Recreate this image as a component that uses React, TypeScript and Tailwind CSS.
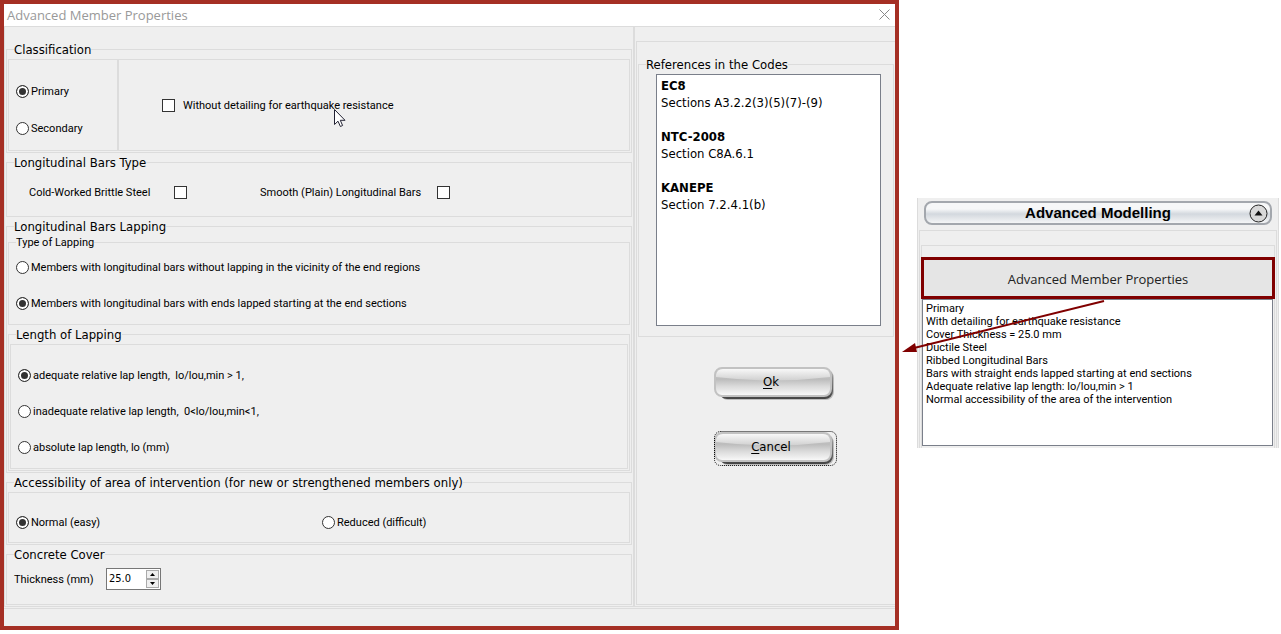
import { useState } from 'react';
import type { ReactNode } from 'react';
import { clsx } from 'clsx';

const dotClass =
  'size-[13px] shrink-0 appearance-none rounded-full border border-[#333] bg-white checked:bg-[#333] checked:shadow-[inset_0_0_0_2px_white]';
const boxClass =
  'size-[13px] shrink-0 appearance-none border border-[#333] bg-white checked:bg-[#333] checked:shadow-[inset_0_0_0_2px_white]';

interface RadioProps {
  name: string;
  label: string;
  value: string;
  current: string;
  onPick: (value: string) => void;
}

const Radio = ({ name, label, value, current, onPick }: RadioProps) => (
  <label className="flex items-center gap-0.5 whitespace-pre leading-[13px]">
    <input
      type="radio"
      name={name}
      value={value}
      checked={current === value}
      onChange={() => onPick(value)}
      className={dotClass}
    />
    {label}
  </label>
);

interface GroupProps {
  title: string;
  small?: boolean;
  children: ReactNode;
  className?: string;
}

const Group = ({ title, small = false, children, className }: GroupProps) => (
  <fieldset className={clsx('min-w-0 border border-[#dcdcdc] px-px', className)}>
    <legend
      className={clsx(
        'ml-1.5',
        small
          ? 'text-[11px] leading-[13px]'
          : "font-['DejaVu_Sans_Condensed','DejaVu_Sans',sans-serif] text-[13px] leading-[17px]"
      )}
    >
      {title}
    </legend>
    {children}
  </fieldset>
);

interface GlossyButtonProps {
  hotkey: string;
  rest: string;
  focused?: boolean;
}

const GlossyButton = ({ hotkey, rest, focused = false }: GlossyButtonProps) => (
  <button
    type="button"
    className="relative h-[35px] w-[123px] pb-1 pr-2 text-center font-['DejaVu_Sans_Condensed','DejaVu_Sans',sans-serif] text-[13px] leading-[17px] outline-none"
  >
    <svg className="absolute inset-0" width="123" height="35" viewBox="0 0 123 35" aria-hidden="true">
      <defs>
        <linearGradient id={`body-${hotkey}`} x1="0" y1="0" x2="0" y2="1">
          <stop offset="0" stopColor="#d2d2d2" />
          <stop offset="0.4" stopColor="#bcbcbc" />
          <stop offset="0.65" stopColor="#dadada" />
          <stop offset="1" stopColor="#fbfbfb" />
        </linearGradient>
        <linearGradient id={`gloss-${hotkey}`} x1="0" y1="0" x2="0" y2="1">
          <stop offset="0" stopColor="#f8f8f8" />
          <stop offset="1" stopColor="#d0d0d0" />
        </linearGradient>
        <linearGradient id={`shade-${hotkey}`} x1="0" y1="0" x2="0" y2="1">
          <stop offset="0" stopColor="#a8a8a8" />
          <stop offset="1" stopColor="#444444" />
        </linearGradient>
      </defs>
      <rect x="6" y="4" width="114" height="30" rx="8" fill="#bdbdbd" />
      <rect x="5" y="3" width="114" height="30" rx="8" fill={`url(#shade-${hotkey})`} />
      <rect x="1" y="2" width="116" height="28" rx="7" fill={`url(#body-${hotkey})`} stroke="#c2c2c2" strokeWidth="2" />
      <path d="M2 11 V9 Q3 3 9 3 H109 Q115 3 116 9 V11 Q59 18 2 11 Z" fill={`url(#gloss-${hotkey})`} />
      {focused && (
        <rect x="0.5" y="0.5" width="122" height="34" rx="6" fill="none" stroke="#000" strokeDasharray="1 1" />
      )}
    </svg>
    <span className="relative">
      <span className="underline underline-offset-2">{hotkey}</span>
      {rest}
    </span>
  </button>
);

const references = [
  { code: 'EC8', sections: 'Sections A3.2.2(3)(5)(7)-(9)' },
  { code: 'NTC-2008', sections: 'Section C8A.6.1' },
  { code: 'KANEPE', sections: 'Section 7.2.4.1(b)' },
];

const summary = [
  'Primary',
  'With detailing for earthquake resistance',
  'Cover Thickness = 25.0 mm',
  'Ductile Steel',
  'Ribbed Longitudinal Bars',
  'Bars with straight ends lapped starting at end sections',
  'Adequate relative lap length: lo/lou,min > 1',
  'Normal accessibility of the area of the intervention',
];

const MemberDialog = () => {
  const [role, setRole] = useState('primary');
  const [lapping, setLapping] = useState('lapped');
  const [length, setLength] = useState('adequate');
  const [access, setAccess] = useState('normal');
  const [thickness, setThickness] = useState(25);

  return (
    <section className="min-w-0 flex-1 border-4 border-[#a52f24] bg-[#efefef]">
      <header className="flex h-[22px] items-center justify-between bg-white pl-[3px] pr-[5px]">
        <h1 className="font-['Open_Sans','Noto_Sans',sans-serif] text-[13px] leading-[18px] text-[#999]">
          Advanced Member Properties
        </h1>
        <button type="button" aria-label="Close" className="pb-0.5">
          <svg width="11" height="11" viewBox="0 0 11 11" className="block" aria-hidden="true">
            <path d="M0.5 0.5 L10.5 10.5 M10.5 0.5 L0.5 10.5" stroke="#888" fill="none" />
          </svg>
        </button>
      </header>

      <div className="flex border-y border-[#dcdcdc]">
        <div className="flex min-w-0 flex-1 flex-col gap-px border-l border-[#dcdcdc] pb-px pl-px pr-px pt-3.5">
          <Group title="Classification" className="pb-px pt-px">
            <div className="flex h-[92px] border border-[#dcdcdc]">
              <div className="flex w-[110px] shrink-0 flex-col gap-6 border-r-2 border-[#dcdcdc] pl-[7px] pt-[25px]">
                <Radio name="role" label="Primary" value="primary" current={role} onPick={setRole} />
                <Radio name="role" label="Secondary" value="secondary" current={role} onPick={setRole} />
              </div>
              <label className="relative flex items-center gap-2 self-center pl-[43px] leading-[13px]">
                <input type="checkbox" className={boxClass} />
                Without detailing for earthquake resistance
                <svg
                  className="absolute left-[214px] top-[9px]"
                  width="13"
                  height="20"
                  viewBox="0 0 13 20"
                  aria-hidden="true"
                >
                  <path
                    d="M1.5 1.5 V16.5 L5 13.2 L7.4 18.5 L9.6 17.5 L7.3 12.3 H12 Z"
                    fill="#fff"
                    stroke="#223"
                  />
                </svg>
              </label>
            </div>
          </Group>

          <Group title="Longitudinal Bars Type" className="pb-[17px] pt-[15px]">
            <div className="flex gap-[73px] pl-[21px] leading-[13px]">
              <label className="flex items-center">
                <span className="w-[145px]">Cold-Worked Brittle Steel</span>
                <input type="checkbox" className={boxClass} />
              </label>
              <label className="flex items-center">
                <span className="w-[177px]">Smooth (Plain) Longitudinal Bars</span>
                <input type="checkbox" className={boxClass} />
              </label>
            </div>
          </Group>

          <Group title="Longitudinal Bars Lapping" className="pb-px pt-px">
            <div className="flex flex-col gap-px">
              <Group title="Type of Lapping" small className="pb-3.5 pt-3">
                <div className="flex flex-col gap-[23px] pl-1.5">
                  <Radio
                    name="lapping"
                    label="Members with longitudinal bars without lapping in the vicinity of the end regions"
                    value="none"
                    current={lapping}
                    onPick={setLapping}
                  />
                  <Radio
                    name="lapping"
                    label="Members with longitudinal bars with ends lapped starting at the end sections"
                    value="lapped"
                    current={lapping}
                    onPick={setLapping}
                  />
                </div>
              </Group>
              <Group title="Length of Lapping" className="pb-px pt-px">
                <div className="flex flex-col gap-[23px] border border-[#dcdcdc] pb-3.5 pl-[7px] pt-6">
                  <Radio
                    name="length"
                    label="adequate relative lap length,  lo/lou,min > 1,"
                    value="adequate"
                    current={length}
                    onPick={setLength}
                  />
                  <Radio
                    name="length"
                    label="inadequate relative lap length,  0<lo/lou,min<1,"
                    value="inadequate"
                    current={length}
                    onPick={setLength}
                  />
                  <Radio
                    name="length"
                    label="absolute lap length, lo (mm)"
                    value="absolute"
                    current={length}
                    onPick={setLength}
                  />
                </div>
              </Group>
            </div>
          </Group>

          <Group
            title="Accessibility of area of intervention (for new or strengthened members only)"
            className="pb-px pt-px"
          >
            <div className="flex border border-[#dcdcdc] pb-[13px] pl-[7px] pt-[23px]">
              <div className="w-[306px]">
                <Radio name="access" label="Normal (easy)" value="normal" current={access} onPick={setAccess} />
              </div>
              <Radio name="access" label="Reduced (difficult)" value="reduced" current={access} onPick={setAccess} />
            </div>
          </Group>

          <Group title="Concrete Cover" className="pb-3.5 pt-[5px]">
            <div className="flex items-center pl-1.5">
              <label htmlFor="thickness" className="w-[92px] leading-[13px]">
                Thickness (mm)
              </label>
              <div className="flex h-[22px] w-[55px] border border-[#777] bg-white p-px">
                <input
                  id="thickness"
                  type="text"
                  value={thickness.toFixed(1)}
                  readOnly
                  className="min-w-0 flex-1 bg-white pb-0.5 pl-px font-['DejaVu_Sans_Condensed','DejaVu_Sans',sans-serif] text-[11px] leading-[13px] outline-none"
                />
                <div className="flex w-[13px] flex-col">
                  <button
                    type="button"
                    aria-label="Increase thickness"
                    onClick={() => setThickness(thickness + 1)}
                    className="flex flex-1 items-center justify-center border border-[#aaa] bg-[#efefef]"
                  >
                    <svg width="5" height="3" viewBox="0 0 5 3" aria-hidden="true">
                      <path d="M0 3 L2.5 0 L5 3 Z" />
                    </svg>
                  </button>
                  <button
                    type="button"
                    aria-label="Decrease thickness"
                    onClick={() => setThickness(thickness - 1)}
                    className="flex flex-1 items-center justify-center border border-[#aaa] bg-[#efefef]"
                  >
                    <svg width="5" height="3" viewBox="0 0 5 3" aria-hidden="true">
                      <path d="M0 0 L2.5 3 L5 0 Z" />
                    </svg>
                  </button>
                </div>
              </div>
            </div>
          </Group>
        </div>

        <div className="flex w-[262px] shrink-0 border-l-2 border-[#dcdcdc] pb-px pl-px pt-3.5">
          <div className="flex-1 border-y border-l border-[#dcdcdc] pl-px pr-px pt-3.5">
            <Group title="References in the Codes" className="pb-2.5 pt-px">
              <div className="ml-4 mr-[11px] h-[252px] border border-[#7a7f8a] bg-white px-1 pt-0.5 font-['DejaVu_Sans_Condensed','DejaVu_Sans',sans-serif] text-[13px] leading-[17px]">
                {references.map((ref) => (
                  <div key={ref.code} className="mb-[17px]">
                    <p className="font-bold">{ref.code}</p>
                    <p>{ref.sections}</p>
                  </div>
                ))}
              </div>
            </Group>
            <div className="flex flex-col items-center gap-[30px] pl-[18px] pt-[29px]">
              <GlossyButton hotkey="O" rest="k" />
              <GlossyButton hotkey="C" rest="ancel" focused />
            </div>
          </div>
        </div>
      </div>

      <footer className="mt-px h-[18px] border-t border-[#dcdcdc]" />
    </section>
  );
};

const ModellingPanel = () => (
  <aside className="relative mt-[198px] w-[362px] shrink-0 border-x border-[#dcdcdc] bg-[#efefef] px-px pt-[3px]">
    <button
      type="button"
      className="mx-[5px] flex h-6 w-[348px] items-center justify-end rounded-lg border-2 border-[#a3a7ad] bg-linear-to-b from-[#f6f7f8] from-30% via-[#d3d8de] via-55% to-[#f4f5f6] pr-0.5"
    >
      <span className="flex-1 pl-[21px] text-center font-['Liberation_Sans',Arial,sans-serif] text-[15px] font-bold leading-[18px]">
        Advanced Modelling
      </span>
      <svg width="19" height="19" viewBox="0 0 19 19" aria-hidden="true">
        <circle cx="9.5" cy="9.5" r="8.5" fill="#d8d8d8" stroke="#222" />
        <path d="M5.5 11.5 L9.5 6.5 L13.5 11.5 Z" fill="#111" />
      </svg>
    </button>
    <div className="mt-[5px] border-x border-t border-[#dcdcdc] px-px pt-3.5">
      <div className="border-x border-t border-[#dcdcdc] pb-0.5 pt-[11px]">
        <button
          type="button"
          className="-mx-px flex h-[42px] w-[354px] items-center justify-center border-[3px] border-[#800000] bg-[#e5e5e5] pt-0.5 font-['Open_Sans','Noto_Sans',sans-serif] text-[13px] leading-[18px] text-[#222]"
        >
          Advanced Member Properties
        </button>
        <ul className="mr-px h-[147px] border border-[#7a7f8a] bg-white pl-[3px] pt-0.5 leading-[13px]">
          {summary.map((line) => (
            <li key={line}>{line}</li>
          ))}
        </ul>
      </div>
    </div>
    <svg className="absolute -left-4 top-[101px]" width="206" height="56" viewBox="0 0 206 56" aria-hidden="true">
      <path d="M202 2 L12 49" stroke="#800000" strokeWidth="2" fill="none" />
      <path d="M0 53 L13 44 L15 53 Z" fill="#800000" />
    </svg>
  </aside>
);

export default function App() {
  return (
    <main className="flex items-start gap-[18px] bg-white pb-1 pr-0.5 font-['Roboto','DejaVu_Sans',sans-serif] text-[11px] text-black">
      <MemberDialog />
      <ModellingPanel />
    </main>
  );
}
